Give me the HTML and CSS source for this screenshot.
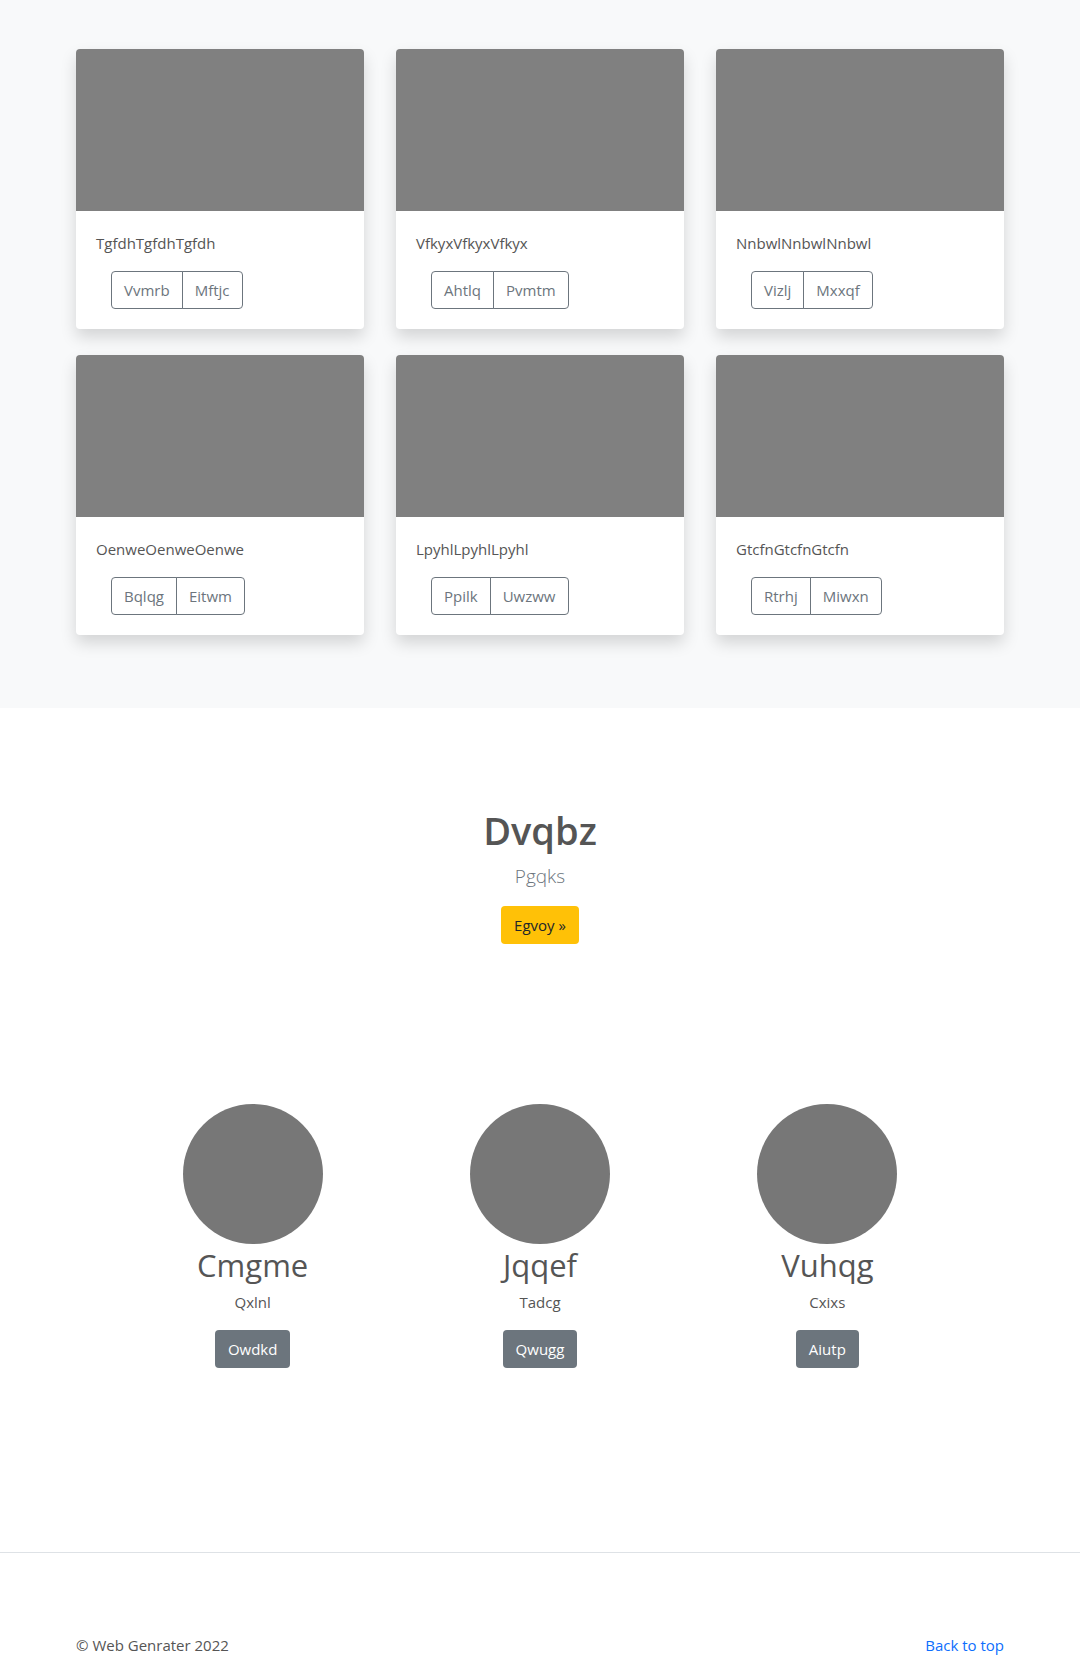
FILE: index.html
```html
<!DOCTYPE html>
<html lang="en">
<head>
<meta charset="utf-8">
<title>Album</title>
<link rel="stylesheet" href="styles.css">
</head>
<body>
<main>
  <section class="album">
    <div class="album-grid">
      <div class="card">
        <div class="card-img"></div>
        <div class="card-body">
          <p class="card-text">TgfdhTgfdhTgfdh</p>
          <div class="btn-group"><button class="btn-outline">Vvmrb</button><button class="btn-outline">Mftjc</button></div>
        </div>
      </div>
      <div class="card">
        <div class="card-img"></div>
        <div class="card-body">
          <p class="card-text">VfkyxVfkyxVfkyx</p>
          <div class="btn-group"><button class="btn-outline">Ahtlq</button><button class="btn-outline">Pvmtm</button></div>
        </div>
      </div>
      <div class="card">
        <div class="card-img"></div>
        <div class="card-body">
          <p class="card-text">NnbwlNnbwlNnbwl</p>
          <div class="btn-group"><button class="btn-outline">Vizlj</button><button class="btn-outline">Mxxqf</button></div>
        </div>
      </div>
      <div class="card">
        <div class="card-img"></div>
        <div class="card-body">
          <p class="card-text">OenweOenweOenwe</p>
          <div class="btn-group"><button class="btn-outline">Bqlqg</button><button class="btn-outline">Eitwm</button></div>
        </div>
      </div>
      <div class="card">
        <div class="card-img"></div>
        <div class="card-body">
          <p class="card-text">LpyhlLpyhlLpyhl</p>
          <div class="btn-group"><button class="btn-outline">Ppilk</button><button class="btn-outline">Uwzww</button></div>
        </div>
      </div>
      <div class="card">
        <div class="card-img"></div>
        <div class="card-body">
          <p class="card-text">GtcfnGtcfnGtcfn</p>
          <div class="btn-group"><button class="btn-outline">Rtrhj</button><button class="btn-outline">Miwxn</button></div>
        </div>
      </div>
    </div>
  </section>

  <section class="hero">
    <h1 class="hero-title">Dvqbz</h1>
    <p class="lead">Pgqks</p>
    <a class="btn-warning" href="#">Egvoy »</a>
  </section>

  <section class="marketing">
    <div class="col">
      <div class="avatar"></div>
      <h2 class="name">Cmgme</h2>
      <p class="sub">Qxlnl</p>
      <a class="btn-secondary" href="#">Owdkd</a>
    </div>
    <div class="col">
      <div class="avatar"></div>
      <h2 class="name">Jqqef</h2>
      <p class="sub">Tadcg</p>
      <a class="btn-secondary" href="#">Qwugg</a>
    </div>
    <div class="col">
      <div class="avatar"></div>
      <h2 class="name">Vuhqg</h2>
      <p class="sub">Cxixs</p>
      <a class="btn-secondary" href="#">Aiutp</a>
    </div>
  </section>
</main>

<footer class="footer">
  <div class="footer-inner">
    <p class="copy">© Web Genrater 2022</p>
    <a class="back" href="#">Back to top</a>
  </div>
</footer>
</body>
</html>
```

FILE: styles.css
```css
* { box-sizing: border-box; }

body {
  margin: 0;
  font-family: "Open Sans", "Noto Sans", sans-serif;
  font-size: 15px;
  line-height: 24px;
  color: #555;
  background: #fff;
}

p { margin: 0; }
h1, h2 { margin: 0; }

.album {
  background: #f8f9fa;
  padding: 49px 0 73px;
}

.album-grid {
  width: 928px;
  margin: 0 auto;
  display: grid;
  grid-template-columns: repeat(3, 288px);
  column-gap: 32px;
  row-gap: 26px;
}

.card {
  background: #fff;
  border-radius: 4px;
  overflow: hidden;
  box-shadow: 0 8px 16px rgba(0, 0, 0, 0.15);
}

.card-img {
  height: 162px;
  background: #808080;
}

.card-body {
  padding: 20px;
}

.card-text {
  margin-bottom: 16px;
  color: #555;
}

.btn-group {
  display: inline-flex;
  margin-left: 15px;
}

.btn-outline {
  font-family: inherit;
  font-size: 15px;
  line-height: 24px;
  padding: 6px 12px;
  color: #6c757d;
  background: transparent;
  border: 1px solid #6c757d;
  margin: 0;
}

.btn-outline:first-child {
  border-radius: 4px 0 0 4px;
}

.btn-outline:last-child {
  border-radius: 0 4px 4px 0;
  margin-left: -1px;
}

.hero {
  padding-top: 99px;
  text-align: center;
}

.hero-title {
  font-size: 38px;
  line-height: 46px;
  font-weight: 600;
  color: #555;
}

.lead {
  margin-top: 8px;
  font-size: 19px;
  line-height: 30px;
  font-weight: 300;
  color: #6c757d;
}

.btn-warning {
  display: inline-block;
  margin-top: 15px;
  padding: 7px 13px;
  background: #ffc107;
  color: #212529;
  border-radius: 4px;
  text-decoration: none;
  font-size: 15px;
  line-height: 24px;
}

.marketing {
  width: 862px;
  margin: 160px auto 0;
  display: grid;
  grid-template-columns: repeat(3, 1fr);
  padding-bottom: 184px;
}

.col {
  display: flex;
  flex-direction: column;
  align-items: center;
}

.avatar {
  width: 140px;
  height: 140px;
  border-radius: 50%;
  background: #777;
}

.name {
  margin-top: 2px;
  font-size: 31px;
  line-height: 38px;
  font-weight: 400;
  color: #555;
}

.sub {
  margin-top: 6px;
  color: #555;
}

.btn-secondary {
  display: inline-block;
  margin-top: 16px;
  padding: 7px 13px;
  background: #6c757d;
  color: #fff;
  border-radius: 4px;
  text-decoration: none;
  font-size: 15px;
  line-height: 24px;
}

.footer {
  border-top: 1px solid #dee2e6;
  padding-top: 80px;
}

.footer-inner {
  width: 928px;
  margin: 0 auto;
  display: flex;
  justify-content: space-between;
  align-items: flex-start;
}

.copy { color: #555; }

.back {
  color: #0d6efd;
  text-decoration: none;
}
```
